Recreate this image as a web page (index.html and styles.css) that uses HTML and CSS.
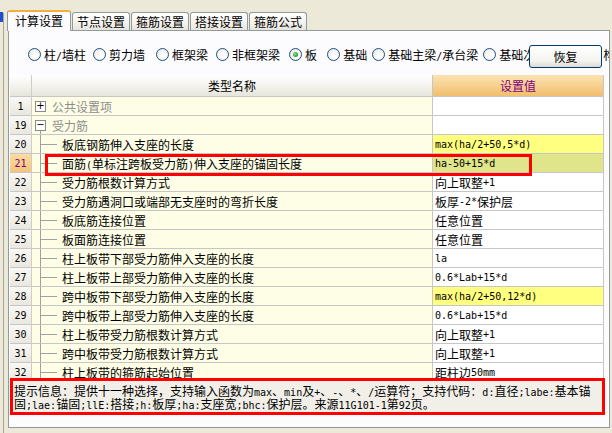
FILE: index.html
```html
<!DOCTYPE html>
<html lang="zh-CN">
<head>
<meta charset="utf-8">
<title>计算设置</title>
<link rel="stylesheet" href="styles.css">
</head>
<body>
<div class="app">
  <div class="side"><div class="mark"></div><div class="vline"></div></div>
  <div class="main">
    <div class="tabs">
      <div class="tab active">计算设置</div>
      <div class="tab">节点设置</div>
      <div class="tab">箍筋设置</div>
      <div class="tab">搭接设置</div>
      <div class="tab">箍筋公式</div>
    </div>
    <div class="panel">
      <div class="radios">
        <label class="radio"><span class="rc"></span><span class="rt">柱<span class="m">/</span>墙柱</span></label>
        <label class="radio"><span class="rc"></span><span class="rt">剪力墙</span></label>
        <label class="radio"><span class="rc"></span><span class="rt">框架梁</span></label>
        <label class="radio"><span class="rc"></span><span class="rt">非框架梁</span></label>
        <label class="radio"><span class="rc on"></span><span class="rt">板</span></label>
        <label class="radio"><span class="rc"></span><span class="rt">基础</span></label>
        <label class="radio"><span class="rc"></span><span class="rt">基础主梁<span class="m">/</span>承台梁</span></label>
        <label class="radio"><span class="rc"></span><span class="rt">基础次梁</span></label>
        <label class="radio"><span class="rc"></span><span class="rt">构件</span></label>
      </div>
      <button class="btn">恢复</button>
      <div class="grid">
        <div class="row head">
          <div class="c num hnum"></div>
          <div class="c name hname">类型名称</div>
          <div class="c val hval">设置值</div>
        </div>
        <div class="row">
          <div class="c num"><span class="m">1</span></div>
          <div class="c name"><span class="tw"><span class="sp"></span><span class="box">+</span><span class="sp"></span></span><span class="grp">公共设置项</span></div>
          <div class="c val"></div>
        </div>
        <div class="row">
          <div class="c num"><span class="m">19</span></div>
          <div class="c name"><span class="tw"><span class="sp"></span><span class="box">−</span><span class="sp stem"></span></span><span class="grp">受力筋</span></div>
          <div class="c val"></div>
        </div>
        <div class="row">
          <div class="c num"><span class="m">20</span></div>
          <div class="c name"><span class="br"></span><span class="lbl">板底钢筋伸入支座的长度</span></div>
          <div class="c val yel"><span class="m">max(ha/2+50,5*d)</span></div>
        </div>
        <div class="row">
          <div class="c num sel"><span class="m">21</span></div>
          <div class="c name"><span class="br"></span><span class="lbl">面筋<span class="m">(</span>单标注跨板受力筋<span class="m">)</span>伸入支座的锚固长度</span></div>
          <div class="c val selv"><span class="m">ha-50+15*d</span></div>
        </div>
        <div class="row">
          <div class="c num"><span class="m">22</span></div>
          <div class="c name"><span class="br"></span><span class="lbl">受力筋根数计算方式</span></div>
          <div class="c val">向上取整<span class="m">+1</span></div>
        </div>
        <div class="row">
          <div class="c num"><span class="m">23</span></div>
          <div class="c name"><span class="br"></span><span class="lbl">受力筋遇洞口或端部无支座时的弯折长度</span></div>
          <div class="c val">板厚<span class="m">-2*</span>保护层</div>
        </div>
        <div class="row">
          <div class="c num"><span class="m">24</span></div>
          <div class="c name"><span class="br"></span><span class="lbl">板底筋连接位置</span></div>
          <div class="c val">任意位置</div>
        </div>
        <div class="row">
          <div class="c num"><span class="m">25</span></div>
          <div class="c name"><span class="br"></span><span class="lbl">板面筋连接位置</span></div>
          <div class="c val">任意位置</div>
        </div>
        <div class="row">
          <div class="c num"><span class="m">26</span></div>
          <div class="c name"><span class="br"></span><span class="lbl">柱上板带下部受力筋伸入支座的长度</span></div>
          <div class="c val"><span class="m">la</span></div>
        </div>
        <div class="row">
          <div class="c num"><span class="m">27</span></div>
          <div class="c name"><span class="br"></span><span class="lbl">柱上板带上部受力筋伸入支座的长度</span></div>
          <div class="c val"><span class="m">0.6*Lab+15*d</span></div>
        </div>
        <div class="row">
          <div class="c num"><span class="m">28</span></div>
          <div class="c name"><span class="br"></span><span class="lbl">跨中板带下部受力筋伸入支座的长度</span></div>
          <div class="c val yel"><span class="m">max(ha/2+50,12*d)</span></div>
        </div>
        <div class="row">
          <div class="c num"><span class="m">29</span></div>
          <div class="c name"><span class="br"></span><span class="lbl">跨中板带上部受力筋伸入支座的长度</span></div>
          <div class="c val"><span class="m">0.6*Lab+15*d</span></div>
        </div>
        <div class="row">
          <div class="c num"><span class="m">30</span></div>
          <div class="c name"><span class="br"></span><span class="lbl">柱上板带受力筋根数计算方式</span></div>
          <div class="c val">向上取整<span class="m">+1</span></div>
        </div>
        <div class="row">
          <div class="c num"><span class="m">31</span></div>
          <div class="c name"><span class="br"></span><span class="lbl">跨中板带受力筋根数计算方式</span></div>
          <div class="c val">向上取整<span class="m">+1</span></div>
        </div>
        <div class="row">
          <div class="c num"><span class="m">32</span></div>
          <div class="c name"><span class="br"></span><span class="lbl">柱上板带的箍筋起始位置</span></div>
          <div class="c val">距柱边<span class="m">50mm</span></div>
        </div>
        <div class="mark-box"></div>
      </div>
      <div class="info">
        <div class="ln">提示信息：提供十一种选择，支持输入函数为<span class="m">max</span>、<span class="m">min</span>及<span class="m">+</span>、<span class="m">-</span>、<span class="m">*</span>、<span class="m">/</span>运算符；支持代码：<span class="m">d:</span>直径<span class="m">;labe:</span>基本锚</div>
        <div class="ln">固<span class="m">;lae:</span>锚固<span class="m">;llE:</span>搭接<span class="m">;h:</span>板厚<span class="m">;ha:</span>支座宽<span class="m">;bhc:</span>保护层。来源<span class="m">11G101-1</span>第<span class="m">92</span>页。</div>
      </div>
    </div>
  </div>
</div>
</body>
</html>
```
FILE: styles.css
```css
* { box-sizing: border-box; }
body {
  margin: 0;
  width: 612px;
  height: 433px;
  overflow: hidden;
  background: #ECE9D8;
  font-family: "Noto Sans CJK SC", sans-serif;
  font-size: 12px;
  color: #000;
}
.m {
  font-family: "DejaVu Sans Mono", monospace;
  font-size: 10px;
}
.app { display: flex; height: 433px; }
.side { width: 8px; display: flex; padding-top: 12px; flex: none; }
.side .mark { width: 3px; height: 10px; background: #1D4FD6; }
.side .vline { width: 1px; background: #A9A698; margin-top: 1px; }
.main { flex: 1; display: flex; flex-direction: column; padding-top: 10px; }

.tabs {
  display: flex;
  align-items: flex-start;
  height: 21px;
  margin-left: -1px;
  gap: 1px;
  position: relative;
  z-index: 2;
}
.tab {
  width: 58px;
  height: 18px;
  margin-top: 2px;
  border: 1px solid #919B9C;
  border-bottom: none;
  border-radius: 3px 3px 0 0;
  background: linear-gradient(#FFFFFF, #F3F2EE 60%, #E6E4DC);
  display: flex;
  align-items: center;
  justify-content: center;
  line-height: 14px;
  padding-top: 1px;
}
.tab.active {
  width: 64px;
  height: 21px;
  margin-top: 0;
  border-top: 2px solid #F5AE3C;
  background: #FCFCFE;
  padding-top: 0;
  padding-bottom: 2px;
}

.panel {
  width: 602px;
  height: 398px;
  margin-top: -1px;
  border: 1px solid #919B9C;
  background: #FCFCFE;
  position: relative;
  overflow: hidden;
}

.radios {
  display: flex;
  align-items: center;
  height: 23px;
  margin-top: 12px;
  padding-left: 19px;
  gap: 8px;
  white-space: nowrap;
}
.radio { display: flex; align-items: center; gap: 3px; flex: none; }
.rt { white-space: nowrap; }
.radio:nth-child(2) { margin-left: -1px; }
.radio:nth-child(3) { margin-left: 3px; }
.radio:nth-child(5) { margin-left: 1px; }
.radio:nth-child(6) { margin-left: 2px; }
.radio:nth-child(7) { margin-left: -3px; }
.radio:nth-child(8) { margin-left: -3px; }
.radio:nth-child(9) { margin-left: 32px; }
.rc {
  width: 13px;
  height: 13px;
  border-radius: 50%;
  border: 1px solid #1C5180;
  background: radial-gradient(circle at 60% 60%, #FFFFFF 20%, #E4E2DA 100%);
  display: flex;
  align-items: center;
  justify-content: center;
  flex: none;
}
.rc.on::after {
  content: "";
  width: 5px;
  height: 5px;
  border-radius: 50%;
  background: radial-gradient(circle at 40% 40%, #8BE08B, #21A121 70%);
}

.btn {
  position: absolute;
  left: 520px;
  top: 14px;
  width: 73px;
  height: 23px;
  border: 1px solid #003C74;
  border-radius: 3px;
  background: linear-gradient(#FFFFFF, #F4F4F0 70%, #DEDBD0);
  font-family: "Noto Sans CJK SC", sans-serif;
  font-size: 12px;
  color: #000;
  padding: 0;
  z-index: 3;
}

.grid {
  margin: 9px 0 0 1px;
  width: 594px;
  height: 303px;
  overflow: hidden;
  position: relative;
}
.row {
  display: grid;
  grid-template-columns: 22px 401px 171px;
  height: 19px;
}
.row.head { height: 22px; }
.c {
  border-right: 1px solid #C6C6C6;
  border-bottom: 1px solid #C6C6C6;
  display: flex;
  align-items: center;
  white-space: nowrap;
  overflow: hidden;
}
.num {
  justify-content: center;
  background: linear-gradient(#F9F8F4, #E9E7DE);
  border-right-color: #D0CEC4;
}
.num.sel { background: linear-gradient(#FBDCA2, #F4C47A); color: #800080; }
.name { background: #FEFEE6; }
.val { background: #FFFFFF; padding-left: 2px; }
.val.yel { background: #FFFF80; }
.val.selv { background: #E0E58B; }
.hnum, .hname { background: linear-gradient(#FFFFFF, #F4F3EE 50%, #E6E5DD); }
.hname { justify-content: center; }
.hval {
  justify-content: center;
  background: linear-gradient(#FBE3B2, #F6CF8C 55%, #F1BE6C);
  color: #800080;
  padding-left: 0;
}

.tw {
  align-self: stretch;
  width: 11px;
  margin-left: 3px;
  display: flex;
  flex-direction: column;
  align-items: center;
  flex: none;
}
.tw .sp { flex: 1; width: 1px; }
.tw .stem { background: #A0A0A0; }
.box {
  width: 11px;
  height: 11px;
  border: 1px solid #8A8A8A;
  background: #FFFFFF;
  font-family: "DejaVu Sans", sans-serif;
  font-size: 10px;
  line-height: 8px;
  display: flex;
  align-items: center;
  justify-content: center;
  flex: none;
}
.grp { margin-left: 6px; color: #8E8E8E; }
.br {
  align-self: stretch;
  width: 17px;
  margin-left: 8px;
  border-left: 1px solid #A0A0A0;
  background: linear-gradient(#A0A0A0, #A0A0A0) no-repeat left 9px / 100% 1px;
  flex: none;
}
.lbl { margin-left: 5px; }

.mark-box {
  position: absolute;
  left: 35px;
  top: 79px;
  width: 487px;
  height: 22px;
  border: 3px solid #FF0000;
}

.info {
  width: 595px;
  height: 37px;
  margin-left: 1px;
  border: 3px solid #FF0000;
  background: #F1EFE8;
  padding: 3px 0 0 1px;
  line-height: 13px;
  white-space: nowrap;
  overflow: hidden;
}
.ln { height: 13px; line-height: 13px; }
```
